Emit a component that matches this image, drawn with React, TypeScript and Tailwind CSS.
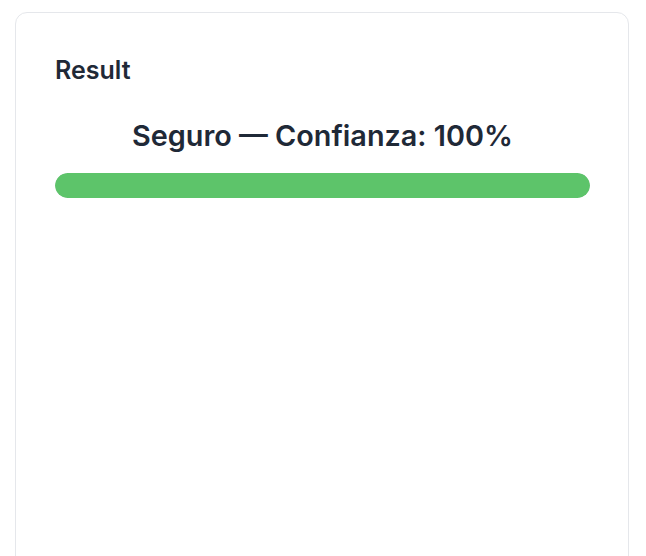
export default function App() {
  const confidence = 100;

  return (
    <div className="min-h-screen bg-white pl-[15px] pr-[17px] pt-[12px] font-['Inter',sans-serif]">
      <div className="h-[600px] rounded-[12px] border border-[#e5e7eb] bg-white pl-[39px] pr-[38px] pt-[42px]">
        <h2 className="text-[25px] font-semibold leading-[30px] text-[#1f2937]">
          Result
        </h2>
        <p className="mt-[33px] text-center text-[28.8px] font-semibold leading-[36px] text-[#1f2937]">
          Seguro — Confianza: {confidence}%
        </p>
        <div className="mt-[19px] h-[25px] w-full overflow-hidden rounded-full bg-[#e5e7eb]">
          <div
            className="h-full rounded-full bg-[#5dc46a]"
            style={{ width: `${confidence}%` }}
          />
        </div>
      </div>
    </div>
  );
}
